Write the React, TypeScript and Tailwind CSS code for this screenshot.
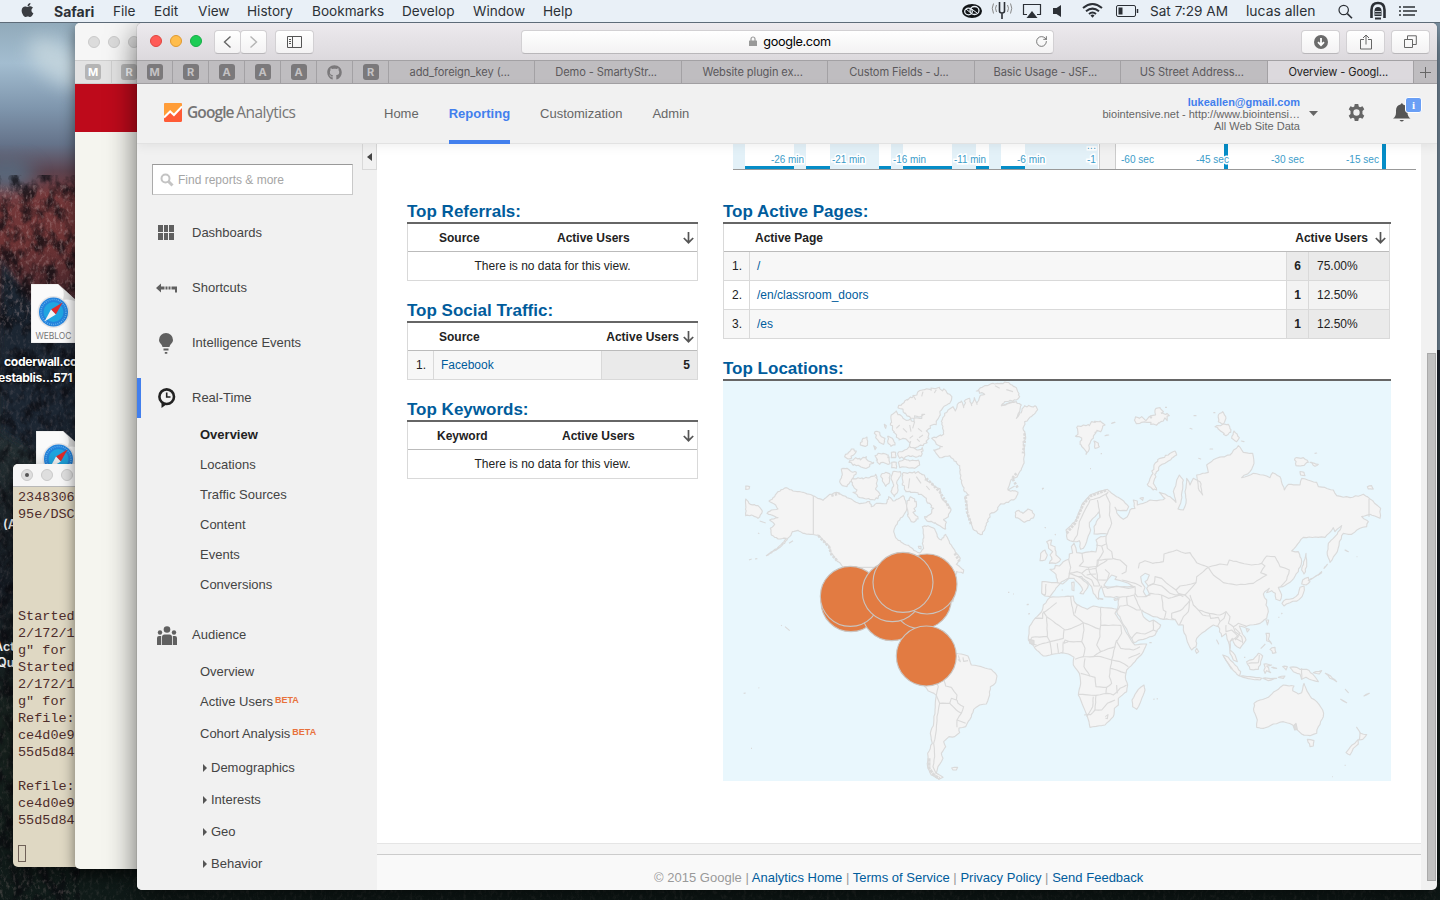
import React from "react";
import { FaApple, FaGithub } from "react-icons/fa";
import { RotateCw } from "lucide-react";

/* ---------- Map geometry ---------- */

// Turns a coarse outline into a jagged coast by splitting and nudging its edges.
function coast(points: string, amp = 2.5, step = 9, closed = true): string {
  const pts = points.trim().split(/\s+/).map((p) => p.split(",").map(Number));
  let seed = 7;
  const rnd = () => {
    seed = (seed * 16807) % 2147483647;
    return seed / 2147483647 - 0.5;
  };
  const out: string[] = [];
  const last = closed ? pts.length : pts.length - 1;
  for (let i = 0; i < last; i++) {
    const a = pts[i];
    const b = pts[(i + 1) % pts.length];
    const n = Math.max(1, Math.round(Math.hypot(b[0] - a[0], b[1] - a[1]) / step));
    for (let k = 0; k < n; k++) {
      const t = k / n;
      const j = k === 0 ? 0 : amp * 2;
      out.push(`${(a[0] + (b[0] - a[0]) * t + rnd() * j).toFixed(1)},${(a[1] + (b[1] - a[1]) * t + rnd() * j).toFixed(1)}`);
    }
  }
  if (!closed) out.push(pts[pts.length - 1].join(","));
  return "M" + out.join("L") + (closed ? "Z" : "");
}

const northAmerica: [string, number][] = [
  ["132,415 145,405 165,402 158,390 138,378 155,365 165,350 190,338 210,348 240,352 270,362 300,376 320,358 340,352 360,362 385,372 410,386 440,380 445,395 460,385 490,386 497,365 510,378 525,372 540,362 548,378 552,398 545,415 530,435 518,452 512,470 518,488 540,505 560,515 578,528 590,534 602,520 598,505 602,480 598,455 615,452 635,462 645,488 655,495 668,478 680,505 695,525 712,550 700,568 722,585 720,595 700,590 690,680 420,680 360,577 340,555 325,535 318,515 300,495 285,480 262,478 240,475 225,466 208,470 200,485 185,505 160,525 130,542 150,528 175,508 190,490 165,492 145,480 142,460 155,448 140,435 165,428", 1.6],
  ["355,282 372,280 385,290 400,292 392,305 380,322 372,335 358,332 350,320 358,300", 2],
  ["385,315 405,308 420,312 440,308 458,298 462,320 458,340 472,360 455,375 430,372 405,365 390,352 402,345 388,330", 4],
  ["365,245 385,222 400,228 392,240 378,252", 4],
  ["378,262 398,248 412,255 430,245 436,258 452,262 440,274 420,278 400,272", 5],
  ["412,210 420,190 432,186 434,198 428,214", 4],
  ["456,170 470,172 475,185 486,190 482,208 468,200 458,188", 4],
  ["494,184 508,190 516,210 504,214 494,200", 3],
  ["462,240 480,235 496,240 496,268 480,262 470,268 460,255", 6],
  ["474,300 488,292 500,296 498,325 488,334 478,318", 3],
  ["510,290 532,290 534,300 522,318 524,350 514,365 504,350 512,330 504,310", 2],
  ["505,232 518,232 518,248 505,248", 2],
  ["506,262 520,262 520,280 506,278", 2],
  ["524,235 545,225 560,215 585,225 598,218 594,244 560,244 530,250", 4],
  ["526,262 545,252 560,258 586,255 590,270 575,280 545,276 530,278", 2],
  ["525,98 545,78 570,66 585,50 605,44 640,40 668,46 686,70 680,85 660,98 652,120 640,140 622,160 610,168 618,190 600,212 570,218 552,195 540,190 528,195 512,172 502,150 505,120 520,108 540,130 565,138 590,130 605,118 585,125 560,125 545,115", 5],
  ["538,296 560,292 590,294 604,300 606,315 630,328 652,350 655,368 670,385 684,402 676,425 664,432 668,462 650,452 635,445 618,440 605,425 622,418 632,400 620,385 610,370 595,358 575,352 548,350 538,330", 4.5],
  ["552,385 562,365 575,372 580,395 570,412 585,432 565,440 555,425", 5],
  ["68,372 82,388 105,392 118,408 105,430 85,420 68,422", 2],
  ["68,333 80,335 78,342 68,343", 1],
  ["484,148 490,152 488,160", 2],
  ["452,212 460,218 456,224", 1],
  ["586,514 594,514 594,522 588,520", 1],
  ["877,412 888,406 900,415 915,402 928,408 934,422 920,436 905,442 890,432 878,428", 2.5],
  ["940,95 944,104 925,125 905,140 900,160 908,185 900,200 905,240 900,270 885,300 862,320 855,345 885,352 878,370 850,382 830,390 820,408 800,418 790,450 778,478 765,475 750,462 738,430 732,400 725,370 738,360 722,345 715,320 712,285 700,260 680,242 650,248 632,225 658,215 640,208 626,190 662,178 660,155 655,140 665,115 690,95 697,108 703,88 715,78 722,98 728,74 740,70 746,92 754,68 762,88 770,66 785,58 760,48 785,32 810,25 850,22 880,38 890,65 880,75 845,80 835,92 880,80 895,90 880,130 905,92 925,95", 3],
];

const southAmerica: [string, number][] = [
  ["600,340 560,260 600,215 650,230 690,250 715,252 735,258 745,285 775,290 805,298 822,318 818,338 802,350 800,375 790,402 770,405 752,418 745,440 728,470 708,474 710,488 695,500 678,500 662,515 668,530 655,550 660,565 645,590 640,610 660,622 648,628 625,615 614,590 614,550 628,520 622,490 632,460 636,420 640,376 615,362", 1.5],
  ["686,594 704,592 700,600 690,600", 2],
];
const southAmericaBorders = [
  "640,376 650,400 642,440 640,480 632,520 635,560 630,590 640,612",
  "650,400 680,400 685,385 700,390 702,375 685,352 668,348 662,330",
  "680,400 700,420 715,430 722,410 705,400 702,390",
  "715,430 702,450 702,472", "702,450 728,460", "706,256 712,275 705,268", "720,262 722,274 735,272",
  "640,376 646,350 640,330",
];

const eurasia =
  "66,305 112,308 108,283 90,268 104,266 106,256 118,258 130,245 146,238 148,222 158,219 154,200 162,190 168,205 170,218 186,220 215,214 228,216 232,195 228,180 242,170 258,168 262,162 222,162 222,140 240,112 236,96 225,110 208,128 212,150 200,185 190,205 182,208 178,182 160,185 142,178 138,150 165,125 188,70 210,45 235,35 262,28 275,40 310,62 326,80 320,92 290,90 285,82 295,105 310,118 322,110 330,90 345,85 340,60 352,63 352,75 370,70 390,60 420,60 435,55 418,37 450,50 468,67 460,35 478,-15 490,0 486,35 482,70 474,87 490,90 498,70 495,35 500,-5 510,15 520,-5 540,5 548,45 535,25 530,-15 565,-23 560,-45 590,-65 630,-75 655,-103 670,-83 698,-80 702,-50 690,-25 665,-7 700,-20 730,-15 750,-7 758,-22 780,-10 793,30 805,13 840,15 845,-5 890,7 895,20 940,30 950,47 990,53 1030,43 1050,57 1082,85 1080,115 1050,103 1025,110 1045,125 1040,140 1020,145 995,163 970,160 958,185 952,215 930,247 922,225 925,190 940,175 960,150 965,137 945,155 940,143 915,172 850,172 815,213 835,215 845,245 835,275 810,307 788,320 775,322 785,345 780,362 768,358 766,340 755,332 740,338 748,325 730,342 740,360 738,375 745,395 740,415 720,430 690,435 675,442 658,438 665,455 678,480 660,505 645,495 637,475 630,485 630,510 645,525 652,545 640,540 630,520 625,485 618,460 605,470 595,440 580,435 570,442 545,460 530,475 528,500 515,510 502,485 490,450 490,435 475,435 465,418 430,418 400,410 380,400 365,390 370,410 388,425 400,420 422,435 405,465 380,475 340,487 335,475 315,440 290,395 295,375 298,352 255,350 248,330 244,318 238,330 235,358 220,340 215,320 202,305 185,290 175,290 205,315 198,330 190,342 180,340 188,330 180,315 162,295 145,295 125,305 105,330 90,350 75,348 65,340";
const africa =
  "90,352 160,348 162,362 170,373 202,388 220,378 245,382 292,388 285,400 305,430 320,460 338,488 345,495 380,492 370,515 345,545 320,570 316,590 323,615 320,635 295,655 295,675 283,685 280,710 255,735 210,742 202,710 190,680 175,645 182,610 178,580 160,555 162,532 145,522 125,518 90,525 70,528 45,505 25,480 28,440 45,415 65,395 70,375";
const islands: [string, number][] = [
  ["80,185 95,180 92,195 105,200 108,225 122,238 112,248 88,250 96,238 90,225 98,215 86,205", 2],
  ["62,220 75,210 82,225 75,240 60,242", 2],
  ["155,308 162,306 162,332 156,330", 1],
  ["234,355 248,358", 1],
  ["282,357 292,354 296,358 284,361", 1],
  ["355,628 372,615 375,630 360,670 350,688 338,680 336,660", 1],
  ["530,505 536,515 530,520 526,512", 1],
];
// Drawn on the same scale, with the origin at the south-east part of the map.
const southEast: [string, number][] = [
  ["762,400 780,390 805,382 822,365 835,358 850,345 882,348 878,362 895,372 905,368 912,340 922,365 935,385 950,395 968,420 970,440 955,470 950,490 930,497 905,492 890,478 878,465 850,455 820,462 790,475 770,472 772,450 762,425", 2],
  ["922,508 942,512 940,528 930,530", 2],
  ["1070,472 1082,490 1100,494 1088,508 1078,510 1080,488", 1.5],
  ["1075,508 1075,522 1060,535 1050,555 1038,548 1050,532", 1.5],
  ["668,255 685,262 705,285 722,305 718,318 700,302 685,280", 2],
  ["720,318 750,320 785,325 780,330 745,326", 2],
  ["740,275 760,268 775,250 788,258 782,275 775,298 750,298", 2],
  ["792,282 815,285 800,288 812,308 800,302 795,310", 3],
  ["870,292 890,292 900,298 920,298 938,312 955,335 935,330 918,322 905,328 900,312 880,305", 2],
  ["940,308 965,302 958,312", 2],
  ["798,190 808,190 805,208 815,222 800,212", 3],
  ["810,238 825,232 828,248 818,250", 3],
  ["798,150 806,150 802,165", 1], ["738,175 748,178 742,186", 1],
  ["846,100 858,88 880,85 895,72 900,52 912,48 910,70 898,88 870,98 852,108", 2.5],
  ["908,30 925,22 930,35 918,45 905,42", 2], ["925,32 945,20 965,8", 1], ["905,0 918,-50 920,-10 912,12", 2],
  ["835,322 855,318 850,325", 2], ["848,290 862,290 858,300", 3],
  ["976,310 992,318 1010,335 990,325", 2], ["1022,388 1040,398", 1], ["1036,358 1045,368", 1],
  ["1092,378 1108,370", 2], ["650,210 656,222", 1], ["815,292 830,295", 2], ["788,325 830,325 805,332", 2],
];
const arctic: [string, number][] = [
  ["80,158 100,150 118,152 125,140 150,138 165,150 155,165 135,172 130,190 120,205 108,238 94,210 95,195 80,185", 5],
  ["132,198 145,205 148,215 135,220", 3],
  ["255,132 275,125 285,135 305,128 315,105 330,98 335,115 358,122 340,138 320,150 290,142 270,145", 8],
  ["505,120 518,110 528,130 520,148 505,140", 2],
  ["515,150 535,148 542,172 528,182 515,170 495,155", 4],
  ["545,190 552,168 568,188 560,200", 2],
  ["310,345 292,328 305,300 312,270 330,250 355,240 375,228 380,240 355,258 330,272 318,295 310,325 320,345", 3],
  ["735,250 760,248 775,262 755,272 738,272", 3], ["780,262 805,268 795,274", 2], ["750,290 762,292 765,302 752,300", 1.5],
  ["952,335 965,332 970,342 955,342", 1.5], ["185,145 195,142", 1], ["165,182 176,180", 1], ["432,122 438,122", 1],
  ["420,160 426,162", 1], ["270,370 280,368 278,376", 1.5], ["480,222 488,222", 1], ["885,525 895,530", 1], ["574,198 582,200", 1],
  ["446,250 452,252", 1], ["795,235 800,234", 1], ["822,580 832,568", 1], ["805,600 815,590", 1],
];
const borders = [
  "258,168 258,185 262,205 275,215 278,235 300,240 320,258 318,275 305,282",
  "228,195 245,198 258,192", "245,198 250,215 235,240 232,260", "186,220 190,245 178,258 205,262 232,260",
  "146,238 152,262 148,280 172,275 185,280 200,268 228,265 232,240 278,237", "112,308 128,312 146,296 148,280 175,290",
  "205,262 210,280 232,300 240,318", "228,265 232,285 232,300 262,300 268,280 255,268", "185,280 195,290 215,300 222,318 238,318",
  "200,285 228,282", "232,260 262,240", "160,185 172,165 178,125 195,90 210,60 240,52 262,40", "240,112 238,90 232,60",
  "262,162 275,130 268,105 270,70 258,45 265,35", "78,312 76,345 66,342",
  "355,265 358,250 375,242 398,250 430,245 432,222 470,210 495,220 510,218 530,248 565,262",
  "565,262 600,252 622,255 628,240 660,248 695,255 725,250 735,258 722,278 740,285 728,292 700,310 650,315 610,308 580,285 565,262",
  "725,250 740,228 765,230 780,260 808,270 800,300 782,320",
  "565,262 550,275 530,290 528,308 500,315 480,318 468,330 440,310 425,295 405,290 402,310 385,318",
  "385,318 400,312 425,318 450,340 466,345 495,345 510,360 495,378 480,392 455,400 455,415 462,418",
  "468,330 475,340 495,345 528,308", "425,345 430,390 438,395 432,418", "425,345 445,355 480,345 490,350",
  "345,340 352,350 378,350 392,340 425,345", "510,345 520,375 535,390 568,400 600,405 618,395 630,410 625,430 640,440 655,430 678,438",
  "510,360 505,395 490,410 478,435", "535,390 548,405 570,408", "568,400 572,415 595,412 600,425 592,440", "600,425 612,415 618,395",
  "618,435 618,455 635,450 655,470 645,480", "640,440 645,455 665,470 668,490",
  "342,345 350,362 362,390", "298,352 320,350 342,345", "320,350 322,375 300,378 290,395", "322,375 350,390 362,390",
  "335,475 350,458 375,462 400,450 412,455", "400,420 400,450", "248,322 290,320 345,320 345,345", "305,300 345,310 365,320",
  "80,410 82,470 35,472", "80,410 135,450 155,445 190,428 162,405 155,375 152,350", "70,395 80,410", "45,415 68,415 68,400 110,368",
  "190,428 192,450 185,485 150,485 135,480 132,490 145,485", "190,428 240,448 242,436 303,436", "242,382 242,436", "165,400 172,375",
  "240,448 240,470 230,495 242,515 285,500 290,480", "242,515 220,530 190,530 195,505 185,485", "303,436 305,460 290,485 302,505 340,510 360,500",
  "132,450 130,475 90,485 82,470", "45,500 70,490 90,485 95,525", "112,490 115,520", "130,485 128,520", "35,472 30,490 50,495",
  "195,535 192,560 210,588 225,592 228,620 260,622 275,610 268,590 270,570 275,540 242,530 220,530",
  "190,530 165,538", "182,580 210,588", "175,643 228,646 262,640 280,645 300,625 320,615", "285,500 275,540 300,545 325,560",
  "270,565 290,570 318,580", "325,535 360,520", "220,650 218,680 200,710", "228,646 225,690 245,690 262,670 285,660",
  "260,622 258,640", "290,615 292,640", "256,710 264,704 262,716 256,714", "192,705 212,704 225,690",
];
const seBorders = ["905,295 905,328", "745,280 775,278 778,255", "690,215 705,205 720,190 705,175", "705,205 725,215"];

const circles: [number, number][] = [
  [384, 95], [506, 122], [595, 87], [382, 79], [508, 65], [612, 42], [540, 37], [610, 258],
];

function Shapes({ items, step = 9 }: { items: [string, number][]; step?: number }) {
  return <>{items.map(([p, a], i) => <path key={i} d={coast(p, a, step)} />)}</>;
}
function Lines({ items }: { items: string[] }) {
  return <>{items.map((p, i) => <path key={i} fill="none" d={coast(p, 1.2, 12, false)} />)}</>;
}

function WorldMap() {
  return (
    <svg className="block h-[400px] w-[668px] bg-[#e9f7fd]" viewBox="0 0 668 400" fill="#f4f4f4" stroke="#dadada" strokeWidth="3.4" strokeLinejoin="round">
      <g transform="translate(0 -6) scale(.33333)">
        <Shapes items={northAmerica} step={6} />
        <path fill="none" d="M271,362V477M360,577H470M110,438L128,444M78,555l8,-3M96,552l7,-1M198,505l12,-8M105,474l4,2M958,343l4,-4M966,457l2,2M996,478l2,2" />
        <path fill="none" d="M540,160l12,12M560,150l4,20M575,140l-6,20M585,160l12,10M600,180l-12,8M560,190l10,-8M530,150l-10,10M590,200l-8,-8M570,60l8,14M600,50l-4,14M640,44l-6,10M560,310l-4,30M580,305l14,20M620,345l-10,-12M835,92l40,-12M870,50l-20,-6M830,40l-14,-8M855,345l20,-12" />
        <path fill="none" strokeWidth="8" d="M286,482L300,497L318,515L325,538L345,560M728,365L732,410L745,450M905,175V200L900,235M880,295L868,310L885,340M610,310L650,350L680,400M695,535L710,560M325,362L350,355" strokeDasharray="7 4" />
      </g>
      <g transform="translate(297 99) scale(.33333)">
        <path d={coast(eurasia, 1.8)} />
        <path d={coast(africa, 1.2)} />
        <Shapes items={islands} />
        <g fill="#e9f7fd">
          <path d="M252,315L262,300L275,285L290,290L285,298L302,302L325,310L342,322L325,325L290,318L262,325Z" />
          <path d="M362,290L375,280L388,285L382,300L375,305L385,318L380,325L390,345L378,348L370,335L375,322L365,308Z" />
        </g>
        <Lines items={borders} />
        <path fill="none" strokeWidth="8" strokeDasharray="8 3" d="M140,160L165,130L190,72L212,48L260,30" />
        <path fill="none" d="M20,374h5M24,402l6,-1M66,27l4,-3M74,142l3,1M105,162l2,3M388,488h7M238,355l12,2M125,330h4M400,658l4,-1M410,656l4,1" />
        <path d="M27,478L42,482L42,492L30,490Z" fill="#ddd" />
      </g>
      <g transform="translate(327 -6) scale(.33333)">
        <Shapes items={arctic} step={6} />
        <path fill="none" d="M957,372V425M120,281h3M152,236h4M920,545h2M490,113h6M345,97h6" />
      </g>
      <g transform="translate(277 189) scale(.33333)">
        <Shapes items={southEast} />
        <Lines items={seBorders} />
        <path d="M880,468L888,460L892,478L884,480Z" fill="#ddd" />
        <path fill="none" d="M844,132l3,-3M835,142l3,0M732,262h4M1034,586h3M996,620h2M670,258L695,298M782,236L796,222" />
      </g>
      <g transform="translate(0 189) scale(.33333)">
        <Shapes items={southAmerica} />
        <Lines items={southAmericaBorders} />
        <path fill="none" strokeWidth="9" strokeDasharray="10 2" d="M618,565L618,595L635,618L650,625" />
        <path fill="none" d="M174,166l3,1M186,170L200,182M106,353l3,1M62,370l6,-1M84,535h3M855,67h4M870,72h3M913,103h4" />
        <g fill="#e27b42" stroke="#c9c4c0" strokeWidth="3.4">
          {circles.map(([x, y], i) => <circle key={i} cx={x} cy={y} r="90" />)}
        </g>
      </g>
    </svg>
  );
}

/* ---------- Desktop behind the windows ---------- */

function Wallpaper() {
  return (
    <svg className="absolute inset-0 h-full w-full" viewBox="0 0 1440 900" preserveAspectRatio="none">
      <defs>
        <linearGradient id="sky" x1="0" y1="0" x2="0" y2="1">
          <stop offset=".02" stopColor="#8fa8b8" /><stop offset=".07" stopColor="#a3bdd0" />
          <stop offset=".12" stopColor="#7f96ad" /><stop offset=".16" stopColor="#65738a" /><stop offset=".19" stopColor="#5c4450" />
          <stop offset=".215" stopColor="#74383a" /><stop offset=".27" stopColor="#6d3334" /><stop offset=".32" stopColor="#4c282d" />
          <stop offset=".37" stopColor="#232733" /><stop offset=".42" stopColor="#1f2a36" />
          <stop offset=".5" stopColor="#232e31" /><stop offset=".65" stopColor="#181f27" />
          <stop offset=".8" stopColor="#18231f" /><stop offset="1" stopColor="#101b19" />
        </linearGradient>
        <filter id="soft" x="-50%" y="-50%" width="200%" height="200%"><feGaussianBlur stdDeviation="9" /></filter>
        <filter id="soften" x="-50%" y="-50%" width="200%" height="200%"><feGaussianBlur stdDeviation="3" /></filter>
        <filter id="grain" x="0" y="0" width="1" height="1" colorInterpolationFilters="sRGB">
          <feTurbulence type="fractalNoise" baseFrequency=".3 .2" numOctaves="4" seed="4" />
          <feColorMatrix values="0 0 0 0 .72  0 0 0 0 .62  0 0 0 0 .62  3 0 0 0 -1.5" />
        </filter>
        <filter id="shade" x="0" y="0" width="1" height="1" colorInterpolationFilters="sRGB">
          <feTurbulence type="fractalNoise" baseFrequency=".09 .06" numOctaves="5" seed="11" />
          <feColorMatrix values="0 0 0 0 .04  0 0 0 0 .04  0 0 0 0 .06  3 0 0 0 -1.2" />
        </filter>
      </defs>
      <rect width="1440" height="900" fill="url(#sky)" />
      <ellipse cx="58" cy="62" rx="34" ry="18" fill="#c8d8df" opacity=".8" filter="url(#soft)" transform="rotate(35 58 62)" />
      <ellipse cx="6" cy="175" rx="30" ry="16" fill="#56788f" opacity=".7" filter="url(#soft)" />
      <path d="M0 255L30 300L80 345V480L0 430Z" fill="#1d2632" filter="url(#soften)" />
      <path d="M1434 20h6v330h-6z" fill="#7e95a8" />
      <rect y="175" width="80" height="725" filter="url(#shade)" opacity=".7" />
      <rect y="185" width="80" height="140" filter="url(#grain)" opacity=".4" />
      <rect y="325" width="80" height="575" filter="url(#grain)" opacity=".16" />
      <rect y="865" width="1440" height="35" filter="url(#grain)" opacity=".12" />
    </svg>
  );
}

function WeblocFile() {
  return (
    <svg width="54" height="59" viewBox="0 0 54 59">
      <path d="M0 0H27L51 22V59H0Z" fill="#fafafa" stroke="#ccc" strokeWidth=".5" />
      <path d="M27 0Q35 5 32 16Q42 14 51 22Z" fill="#dcdcdc" />
      <circle cx="22.500" cy="28" r="16" fill="#e4e4e7" />
      <circle cx="22.500" cy="28" r="14.500" fill="#2383dc" />
      <circle cx="22.500" cy="28" r="10" fill="#20a5e0" />
      <circle cx="22.500" cy="28" r="12.500" fill="none" stroke="#79bdf0" strokeWidth="1.500" strokeDasharray=".7 1.400" />
      <path d="M31.500 18.500L20 25.500L24.800 30.500Z" fill="#e02b2b" /><path d="M13.500 37.500L20 25.500L24.800 30.500Z" fill="#f4f4f4" />
      <text x="4.500" y="55" fontFamily="Inter, sans-serif" fontSize="8.500" fill="#777" textLength="36">WEBLOC</text>
    </svg>
  );
}

function Dot({ className }: { className: string }) {
  return <span className={`h-3 w-3 shrink-0 rounded-full border ${className}`} />;
}

const terminalText = `2348306
95e/DSC_





Started
2/172/1
g" for
Started
2/172/1
g" for
Refile:
ce4d0e9
55d5d84

Refile:
ce4d0e9
55d5d84`;

function Terminal() {
  return (
    <div className="absolute top-[464px] left-[13px] h-[403px] w-[120px] overflow-hidden rounded-[5px] bg-[#dfd8c3] shadow-[0_8px_20px_rgba(0,0,0,.5)]">
      <div className="flex h-[23px] items-center gap-2 border-b border-[#b8b8b8] bg-[#f6f6f6] pl-2">
        <span className="flex h-3 w-3 items-center justify-center rounded-full border border-[#c9c9c9] bg-[#dedede]"><span className="h-1 w-1 rounded-full bg-[#555]" /></span>
        <Dot className="border-[#c9c9c9] bg-[#dedede]" />
        <Dot className="border-[#c9c9c9] bg-[#dedede]" />
      </div>
      <pre className="pt-[2px] pl-[5px] font-['Liberation_Mono',monospace] text-[13.500px] leading-[17px] text-[#4e2d2b]">{terminalText}</pre>
      <div className="mt-[16px] ml-[5px] h-[17px] w-2 border border-[#6f6158]" />
    </div>
  );
}

function Letter({ children, className = "bg-[#7b797b] text-[#c4c2c4]" }: { children: string; className?: string }) {
  return <span className={`flex h-4 w-4 items-center justify-center rounded-[3px] text-[11px] font-bold ${className}`}>{children}</span>;
}

function BackWindow() {
  return (
    <div className="absolute top-[23px] left-[75px] h-[846px] w-[400px] overflow-hidden rounded-[5px] bg-[#f5f5ef] shadow-[0_4px_14px_rgba(0,0,0,.5)]">
      <div className="flex h-[37px] items-center gap-2 bg-[#f6f6f6] pl-[13px]">
        <Dot className="border-[#cacaca] bg-[#dcdcdc]" /><Dot className="border-[#cacaca] bg-[#dcdcdc]" /><Dot className="border-[#cacaca] bg-[#dcdcdc]" />
      </div>
      <div className="flex h-6 border-y border-[#cfcfcf] bg-[#e3e3e3]">
        <div className="flex w-[37px] items-center justify-center border-r border-[#cfcfcf]"><Letter className="bg-[#b5b5b5] text-white">M</Letter></div>
        <div className="flex w-[34px] items-center justify-center"><Letter className="bg-[#b5b5b5] text-white">R</Letter></div>
      </div>
      <div className="h-12 bg-[#be0a1b]" />
    </div>
  );
}

/* ---------- macOS menu bar ---------- */

const menus: [string, string][] = [
  ["File", "w-[41px]"], ["Edit", "w-[44px]"], ["View", "w-[49px]"], ["History", "w-[65px]"],
  ["Bookmarks", "w-[90px]"], ["Develop", "w-[71px]"], ["Window", "w-[70px]"], ["Help", "w-[40px]"],
];

function MenuBar() {
  return (
    <div className="absolute inset-x-0 top-0 flex h-[23px] items-center border-b border-[#5d6b78] bg-[#e9f0f7] text-[13.600px] whitespace-nowrap text-[#2c3036]">
      <FaApple className="mb-[2px] ml-[20px] h-[16px] w-[15px] text-[#3a3d42]" />
      <span className="ml-[19px] w-[59px] text-[14px] font-bold">Safari</span>
      {menus.map(([m, w]) => <span key={m} className={w}>{m}</span>)}
      <StatusIcons />
    </div>
  );
}

function StatusIcons() {
  return (
    <div className="ml-auto flex h-[22px] w-[480px] items-center text-[13.600px] text-[#2c3036]">
      <svg className="shrink-0" width="182" height="22" viewBox="960 0 182 22" fill="none" stroke="#2c3036">
        <ellipse cx="972" cy="11" rx="10" ry="7" fill="#111417" stroke="none" />
        <ellipse cx="968.500" cy="11.500" rx="3.800" ry="3.300" stroke="#e9f0f7" strokeWidth="1.300" />
        <ellipse cx="974.500" cy="10.500" rx="4.500" ry="4" stroke="#e9f0f7" strokeWidth="1.300" />
        <path d="M966 9L972 14M971 8.500L977 13" stroke="#e9f0f7" />
        <path d="M999.500 2V11Q999.500 13 1002 13Q1004.500 13 1004.500 11V2M1002 13V19" strokeWidth="1.600" />
        <path d="M996.500 5Q994.500 8 996.500 12M993.500 3.500Q991 8 993.500 13.500M1007.500 5Q1009.500 8 1007.500 12M1010.500 3.500Q1013 8 1010.500 13.500" stroke="#888" />
        <path d="M1027 14.500H1023.500V4.500H1040.500V14.500H1037" strokeWidth="1.200" /><path d="M1026.500 18L1032 11L1037.500 18Z" fill="#2c3036" stroke="none" />
        <path d="M1053 8H1056.500L1061 5V17L1056.500 14H1053Z" fill="#2c3036" stroke="none" />
        <path d="M1083 8Q1092.500 0 1102 8M1086 11.300Q1092.500 6 1099 11.300M1089 14Q1092.500 11 1096 14" strokeWidth="2" />
        <path d="M1090.500 15.500Q1092.500 13.700 1094.500 15.500L1092.500 17.700Z" fill="#2c3036" stroke="none" />
        <rect x="1116.500" y="5.500" width="19" height="11" rx="1.500" /><rect x="1118.500" y="7.500" width="4" height="7" fill="#2c3036" stroke="none" /><path d="M1137.500 9V13" strokeWidth="1.500" />
      </svg>
      <span className="ml-[8px] w-[96px] whitespace-nowrap">Sat 7:29 AM</span>
      <span className="w-[92px] text-[13.900px] whitespace-nowrap">lucas allen</span>
      <svg className="shrink-0" width="15" height="15" fill="none" stroke="#2c3036"><circle cx="5.700" cy="6" r="4.700" strokeWidth="1.200" /><path d="M9.300 9.600L14 14.300" strokeWidth="1.600" /></svg>
      <svg className="ml-[15px] shrink-0" width="56" height="22" viewBox="1368 0 56 22" fill="none" stroke="#2c3036">
        <path d="M1371.500 18V10Q1371.500 3 1378 3Q1384.500 3 1384.500 10V18" strokeWidth="2.600" />
        <path d="M1374.500 16V11Q1374.500 7 1378 7Q1381.500 7 1381.500 11V16Z" fill="#2c3036" stroke="none" />
        <path d="M1375 11.500H1381M1375 14H1381" stroke="#e9f0f7" strokeWidth=".8" /><path d="M1375 18.500H1381" strokeWidth="2" />
        <path d="M1403 7H1415M1403 11H1417M1403 15H1415" strokeWidth="1.700" /><path d="M1399 7H1401M1399 11H1401M1399 15H1401" strokeWidth="1.700" />
      </svg>
    </div>
  );
}

/* ---------- Safari chrome ---------- */

function ToolButton({ className, children }: { className: string; children: React.ReactNode }) {
  return <div className={`flex h-[24px] items-center justify-center rounded-[4px] border border-[#d2d0d3] border-b-[#b9b7ba] bg-gradient-to-b from-white to-[#f3f2f3] ${className}`}>{children}</div>;
}

function Toolbar() {
  return (
    <div className="flex h-[37px] shrink-0 items-center bg-gradient-to-b from-[#edeaee] to-[#dcd9dd] pl-[13px]">
      <div className="-mt-[2px] flex w-[64px] gap-2">
        <Dot className="border-[#e0443e] bg-[#ff5b57]" /><Dot className="border-[#e0992f] bg-[#ffbd4c]" /><Dot className="border-[#14ae46] bg-[#1dcc55]" />
      </div>
      <ToolButton className="w-[27px]"><svg width="9" height="14" fill="none" stroke="#666" strokeWidth="1.400"><path d="M7.500 1.500L1.500 7L7.500 12.500" /></svg></ToolButton>
      <ToolButton className="-ml-px w-[27px]"><svg width="9" height="14" fill="none" stroke="#b5b5b5" strokeWidth="1.400"><path d="M1.500 1.500L7.500 7L1.500 12.500" /></svg></ToolButton>
      <ToolButton className="ml-[8px] w-[39px]"><svg width="15" height="12" fill="none" stroke="#555"><path d="M.5 .5H14.500V11.500H.5ZM5.500 .5V11.500M2 3.500H4M2 5.500H4M2 7.500H4" /></svg></ToolButton>
      <ToolButton className="ml-[207px] w-[533px] text-[12.700px] text-black">
        <span className="flex flex-1 items-center justify-center gap-[6px] pl-[23px] tracking-[-0.350px]">
          <svg width="8" height="10"><path d="M2 5V3a2 2 0 0 1 4 0V5" fill="none" stroke="#999" strokeWidth="1.200" /><rect y="4.500" width="8" height="5.500" rx=".6" fill="#999" /></svg>
          google.com
        </span>
        <RotateCw size={13} strokeWidth={1.600} className="mr-[5px] text-[#666]" />
      </ToolButton>
      <div className="ml-[247px] flex gap-[6px]">
        <ToolButton className="w-[39px]"><svg width="14" height="14"><circle cx="7" cy="7" r="7" fill="#6b6b6b" /><path d="M7 3V10M4 7.200L7 10.200L10 7.200" fill="none" stroke="#fff" strokeWidth="1.800" /></svg></ToolButton>
        <ToolButton className="w-[39px]"><svg width="12" height="16" fill="none" stroke="#666"><path d="M4 5.500H.5V15H11.500V5.500H8M6 10.500V1M3 4L6 1L9 4" /></svg></ToolButton>
        <ToolButton className="w-[39px]"><svg width="13" height="13" fill="none" stroke="#666"><path d="M.5 4.500H8.500V12.500H.5ZM3.500 4.500V.8H12.300V9.500H8.500" /></svg></ToolButton>
      </div>
    </div>
  );
}

const tabs = ["add_foreign_key (...", "Demo - SmartyStr...", "Website plugin ex...", "Custom Fields - J...", "Basic Usage - JSF...", "US Street Address...", "Overview - Googl..."];

function TabBar() {
  return (
    <div className="flex h-6 shrink-0 border-y border-[#a3a1a4] bg-[#bfbdc0] text-[11.100px] tracking-[-0.100px] text-[#5b595c]">
      {["M", "R", "A", "A", "A", "", "R"].map((l, i) => (
        <div key={i} className="flex w-9 shrink-0 items-center justify-center border-r border-[#a3a1a4]">
          {l ? <Letter>{l}</Letter> : <FaGithub size={15} className="text-[#7b797b]" />}
        </div>
      ))}
      {tabs.map((t, i) => (
        <div key={t} className={`flex flex-1 items-center justify-center border-r border-[#a3a1a4] pr-2 pl-1 whitespace-nowrap ${i === 6 ? "bg-[#dcd9dd] text-[#222]" : ""}`}>{t}</div>
      ))}
      <div className="flex w-[23px] items-center justify-center"><svg width="11" height="11" stroke="#666"><path d="M5.500 0V11M0 5.500H11" /></svg></div>
    </div>
  );
}

/* ---------- Google Analytics ---------- */

function Header() {
  return (
    <div className="relative z-10 flex h-[60px] shrink-0 border-b border-[#e2e2e2] bg-[#f1f1f1] text-[13px] text-[#666] shadow-[0_3px_10px_rgba(0,0,0,.06)]">
      <svg className="mt-[19px] ml-[27px]" width="18" height="19" viewBox="0 0 19 19" preserveAspectRatio="none">
        <rect width="19" height="19" rx="1.500" fill="#ff5b36" /><path d="M0 1.500Q0 0 1.500 0H17.500Q19 0 19 1.500V4L11 12L7 8L0 14.500Z" fill="#ff9d38" />
        <path d="M0 14.500L6.500 8.500L10.500 12L19 3.500" fill="none" stroke="#fff" strokeWidth="2.200" />
      </svg>
      <div className="mt-[18px] ml-[5px] w-[197px] font-['Open_Sans',sans-serif] text-[15.500px] leading-5 tracking-[-0.500px] whitespace-nowrap text-[#757575]">
        <span className="font-semibold tracking-[-0.900px]">Google</span> <span className="-ml-[1px]">Analytics</span>
      </div>
      <div className="flex gap-[30px] leading-[59px]">
        <span>Home</span>
        <span className="h-[60px] border-b-[4px] border-[#427fed] font-bold text-[#427fed]">Reporting</span>
        <span>Customization</span>
        <span>Admin</span>
      </div>
      <div className="ml-auto pt-[12px] text-right text-[11px] leading-[12px]">
        <div className="font-bold text-[#427fed]">lukeallen@gmail.com</div>
        <div>biointensive.net - http://www.biointensi…</div>
        <div>All Web Site Data</div>
      </div>
      <svg className="mt-[27px] ml-[9px]" width="9" height="5"><path d="M0 0H9L4.500 5Z" fill="#666" /></svg>
      <svg className="mt-[20px] ml-[30px]" width="17" height="17" viewBox="0 0 24 24">
        <path fill="#666" d="M9.500 0h5l.7 3.500 1.800 1L20.500 3.300 23 7.500 20.400 10v4L23 16.500l-2.500 4.200L17 19.500l-1.800 1-.7 3.500h-5l-.7-3.500-1.800-1-3.500 1.200L1 16.500 3.600 14v-4L1 7.500 3.500 3.300 7 4.500l1.800-1ZM12 7.500a4.500 4.500 0 1 0 0 9a4.500 4.500 0 0 0 0-9Z" />
      </svg>
      <div className="relative mt-[18px] mr-[18px] ml-[28px] w-[26px]">
        <svg width="18" height="21"><path d="M0 16.500Q3 14.500 3 10.500V8.500Q3 3.500 7.500 2.500Q9 0 10 2.500Q14.500 3.500 14.500 8.500V10.500Q14.500 14.500 17.500 16.500ZM6.500 18H11Q8.800 21 6.500 18" fill="#555" /></svg>
        <span className="absolute -top-[5px] left-[12px] flex h-4 w-[17px] items-center justify-center rounded-[3px] border border-white bg-[#6a9ff5] font-['Liberation_Serif',serif] text-[11px] font-bold text-white">i</span>
      </div>
    </div>
  );
}

function Section({ icon, label, active, className = "h-[55px]" }: { icon: React.ReactNode; label: string; active?: boolean; className?: string }) {
  return (
    <div className={`flex items-center ${className}`}>
      <span className={`h-10 w-1 ${active ? "bg-[#427fed]" : ""}`} />
      <span className="flex w-[51px] items-center pl-[15px]">{icon}</span>
      <span>{label}</span>
    </div>
  );
}

function Beta() {
  return <span className="ml-[2px] pt-[9px] text-[9px] leading-[9px] font-bold text-[#e8713c]">BETA</span>;
}

function Sidebar() {
  return (
    <div className="relative w-[240px] shrink-0 bg-[#f1f1f1] pt-[20px] text-[13px] text-[#444]">
      <div className="absolute top-0 right-0 flex h-[26px] w-[15px] items-center justify-center border border-t-0 border-[#d9d9d9]"><svg width="5" height="8"><path d="M5 0V8L0 4Z" fill="#444" /></svg></div>
      <div className="ml-[15px] flex h-[31px] w-[201px] items-center border border-[#c9c9c9] border-t-[#999] border-l-[#aaa] bg-white pl-[7px] text-[12px] text-[#a5a5a5]">
        <svg width="14" height="14" className="mr-[4px]" fill="none" stroke="#c4c4c4"><circle cx="5.500" cy="5.500" r="4" strokeWidth="2" /><path d="M8.500 8.500L12.500 12.500" strokeWidth="3" /></svg>
        Find reports &amp; more
      </div>
      <div className="pt-[10px]">
        <Section label="Dashboards" icon={<svg className="ml-[2px]" width="16" height="16" fill="#606060"><path d="M0 0h5v7H0ZM6 0h4v7H6ZM11 0h5v7h-5ZM0 8h5v7H0ZM6 8h4v7H6ZM11 8h5v7h-5Z" /></svg>} />
        <Section label="Shortcuts" icon={<svg width="21" height="10" fill="#606060"><path d="M0 5L5 .5V3.500H8.500V6.500H5V9.500ZM9.500 3.500h2v3h-2ZM12.500 3.500h2v3h-2ZM15.500 3.500H21V9.500H19V6.500H15.500Z" /></svg>} />
        <Section label="Intelligence Events" icon={<svg className="mt-[2px] ml-[3px]" width="14" height="21" fill="#606060"><path d="M7 0a7 7 0 0 1 7 7c0 3-3 4-3.500 7h-7C3 11 0 10 0 7a7 7 0 0 1 7-7ZM4.500 15.500h5v2h-5ZM5.800 19h2.500v1.800H5.800Z" /></svg>} />
        <Section active label="Real-Time" icon={<svg className="mt-[2px] ml-[2px]" width="18" height="21" fill="none" stroke="#222"><circle cx="8.700" cy="8.700" r="7.300" strokeWidth="2.600" /><path d="M8.700 4.500V9H12.500" strokeWidth="1.600" /><path d="M3.500 14V20L9 16Z" fill="#222" stroke="none" /></svg>} />
      </div>
      <div className="flex flex-col pl-[63px] leading-[30px]">
        <span className="-mt-[5px] font-bold text-[#222]">Overview</span>
        <span>Locations</span><span>Traffic Sources</span><span>Content</span><span>Events</span><span>Conversions</span>
      </div>
      <Section className="mt-[15px] h-[40px]" label="Audience" icon={<svg className="ml-[1px]" width="20" height="19" fill="#606060"><circle cx="10" cy="3.500" r="3.300" /><circle cx="3" cy="6.500" r="2.200" /><circle cx="17" cy="6.500" r="2.200" /><path d="M5 19V11Q5 8.500 7.500 8.500H12.500Q15 8.500 15 11V19ZM0 19V12Q0 10 2 10H4.200V19ZM20 19V12Q20 10 18 10H15.800V19Z" /></svg>} />
      <div className="flex flex-col pl-[63px]">
        <span className="mt-[2px] leading-[30px]">Overview</span>
        <span className="flex h-[30px] leading-[30px]">Active Users<Beta /></span>
        <span className="mt-[2px] flex h-[30px] leading-[30px]">Cohort Analysis<Beta /></span>
        <div className="mt-[3px]">
          {["Demographics", "Interests", "Geo", "Behavior"].map((t) => (
            <div key={t} className="flex h-8 items-center gap-[4px] pl-[3px]"><svg width="4" height="8"><path d="M0 0V8L4 4Z" fill="#555" /></svg>{t}</div>
          ))}
        </div>
      </div>
    </div>
  );
}

const bands: [number, number][] = [[733, 12], [794, 12], [830, 49], [891, 12], [952, 24], [989, 12], [1025, 73]];
const bars: [number, number][] = [[745, 49], [806, 24], [879, 12], [903, 49], [976, 13], [1001, 24]];
const labels: [string, number, number][] = [
  ["-26 min", 771, 33], ["-21 min", 832, 33], ["-16 min", 893, 33], ["-11 min", 954, 32], ["-6 min", 1017, 28], ["-1", 1087, 9],
  ["-60 sec", 1121, 33], ["-45 sec", 1196, 33], ["-30 sec", 1271, 33], ["-15 sec", 1346, 33],
];

function Chart() {
  return (
    <svg className="ml-[356px] block" width="683" height="26" viewBox="733 144 683 26">
      {bands.map(([x, w]) => <rect key={x} x={x} y="144" width={w} height="25" fill="#e3f1f8" />)}
      {bars.map(([x, w]) => <rect key={x} x={x} y="166" width={w} height="3" fill="#058dc7" />)}
      <rect x="1100" y="144" width="15" height="25" fill="#f1f1f1" />
      <path d="M1099.500 144V169M1115.500 144V169" stroke="#ccc" />
      <rect x="1224" y="144" width="4" height="25" fill="#058dc7" /><rect x="1382" y="144" width="4" height="25" fill="#058dc7" />
      <path d="M733 169.500H1416" stroke="#999" />
      <g fontFamily="Liberation Sans, sans-serif" fontSize="10" fill="#3b9cc9" stroke="#fff" strokeWidth="3" paintOrder="stroke">
        {labels.map(([t, x, w]) => <text key={t} x={x} y="162.500" textLength={w} lengthAdjust="spacingAndGlyphs">{t}</text>)}
        <text x="1087" y="149" textLength="9">...</text>
      </g>
    </svg>
  );
}

function Arrow() {
  return <svg width="11" height="12" fill="none" stroke="#555" strokeWidth="1.700"><path d="M5.500 0V10.500M.8 6L5.500 10.700L10.200 6" /></svg>;
}

function Panel({ title, children }: { title: string; children: React.ReactNode }) {
  return (
    <section className="mb-4">
      <h2 className="h-[26px] border-b-2 border-[#666] text-[17px] leading-[27px] font-bold text-[#005c9c]">{title}</h2>
      {children}
    </section>
  );
}

function EmptyTable({ first, firstPad }: { first: string; firstPad: string }) {
  return (
    <div className="border border-t-0 border-[#d9d9d9]">
      <div className="flex h-7 items-center border-b border-[#bbb] pr-[3px] font-bold">
        <span className={firstPad}>{first}</span><span>Active Users</span>
        <span className="ml-auto"><Arrow /></span>
      </div>
      <div className="h-7 text-center leading-7">There is no data for this view.</div>
    </div>
  );
}

const pages: [string, string, string][] = [["/", "6", "75.00%"], ["/en/classroom_doors", "1", "12.50%"], ["/es", "1", "12.50%"]];

function Report() {
  return (
    <main className="flex w-[1044px] shrink-0 flex-col bg-white text-[12px] text-[#222]">
      <Chart />
      <div className="flex gap-[25px] pt-[28px] pl-[30px]">
        <div className="w-[291px]">
          <Panel title="Top Referrals:"><EmptyTable first="Source" firstPad="w-[149px] pl-[31px]" /></Panel>
          <Panel title="Top Social Traffic:">
            <div className="border border-t-0 border-[#d9d9d9]">
              <div className="flex h-7 items-center border-b border-[#bbb] pr-[3px] pl-[31px] font-bold">
                <span>Source</span><span className="mr-[4px] ml-auto">Active Users</span><Arrow />
              </div>
              <div className="flex h-7 bg-[#f7f7f7] leading-7">
                <span className="w-[26px] border-r border-[#d9d9d9] pl-2">1.</span>
                <span className="flex-1 pl-[7px] text-[#005c9c]">Facebook</span>
                <span className="w-[96px] border-l border-[#d9d9d9] bg-[#eaeaea] pr-[7px] text-right font-bold">5</span>
              </div>
            </div>
          </Panel>
          <Panel title="Top Keywords:"><EmptyTable first="Keyword" firstPad="w-[154px] pl-[29px]" /></Panel>
        </div>
        <div className="w-[668px]">
          <Panel title="Top Active Pages:">
            <div className="mr-[1px] border-x border-[#d9d9d9]">
              <div className="flex h-7 items-center border-b border-[#bbb] pr-[3px] pl-[31px] font-bold">
                <span>Active Page</span><span className="mr-[7px] ml-auto">Active Users</span><Arrow />
              </div>
              {pages.map(([p, n, pct], i) => (
                <div key={p} className={`flex h-[29px] border-b border-[#d9d9d9] leading-7 ${i % 2 ? "bg-white" : "bg-[#f7f7f7]"}`}>
                  <span className="w-[26px] border-r border-[#d9d9d9] pl-2">{i + 1}.</span>
                  <span className="flex-1 pl-[7px] text-[#005c9c]">{p}</span>
                  <span className={`w-[22px] border-l border-[#d9d9d9] pr-[7px] text-right font-bold ${i % 2 ? "bg-[#f3f3f3]" : "bg-[#eaeaea]"}`}>{n}</span>
                  <span className={`w-[81px] border-l border-[#d9d9d9] pl-[8px] ${i % 2 ? "bg-[#f3f3f3]" : "bg-[#eaeaea]"}`}>{pct}</span>
                </div>
              ))}
            </div>
          </Panel>
          <Panel title="Top Locations:"><WorldMap /></Panel>
        </div>
      </div>
      <footer className="mt-auto border-t border-[#e5e5e5] bg-[#f5f5f5] pt-[10px]">
        <div className="h-9 border-t border-[#ccc] bg-[#f9f9f9] pt-[14px] pl-[277px] text-[13px] leading-[18px] tracking-[0.014px] text-[#999]">
          © 2015 Google | <span className="text-[#005c9c]">Analytics Home</span> | <span className="text-[#005c9c]">Terms of Service</span> | <span className="text-[#005c9c]">Privacy Policy</span> | <span className="text-[#005c9c]">Send Feedback</span>
        </div>
      </footer>
    </main>
  );
}

export default function App() {
  return (
    <div className="relative h-[900px] w-[1440px] overflow-hidden bg-[#141d20] font-['Inter',sans-serif]">
      <Wallpaper />
      <div className="absolute top-[284px] left-[31px]"><WeblocFile /></div>
      <div className="absolute top-[431px] left-[36px]"><WeblocFile /></div>
      <div className="absolute top-[354px] left-[4px] text-[12.200px] leading-4 font-bold tracking-[-0.350px] whitespace-pre text-white [text-shadow:0_1px_2px_#000]">coderwall.com<br /><span className="-ml-[6px]">establis...571</span></div>
      <div className="absolute top-[517px] left-[3px] text-[12.500px] leading-4 font-semibold text-white">(A</div>
      <div className="absolute top-[639px] left-[-6px] text-[12.500px] leading-4 font-semibold text-white">Act<br /><span className="pl-[3px]">Qu</span></div>
      <Terminal />
      <BackWindow />
      <div className="absolute top-[23px] left-[137px] flex h-[867px] w-[1300px] flex-col overflow-hidden rounded-[5px] bg-[#f1f1f1] shadow-[0_10px_30px_rgba(0,0,0,.6),0_0_1px_rgba(0,0,0,.6)]">
        <Toolbar />
        <TabBar />
        <div className="flex min-h-0 flex-1 flex-col font-['Liberation_Sans',Arial,sans-serif]">
          <Header />
          <div className="flex min-h-0 flex-1">
            <Sidebar />
            <Report />
            <div className="flex flex-1 pl-[6px]"><div className="mt-[209px] h-[528px] w-[9px] border border-[#aaa] bg-[#c1c1c1]" /></div>
          </div>
        </div>
      </div>
      <MenuBar />
    </div>
  );
}
